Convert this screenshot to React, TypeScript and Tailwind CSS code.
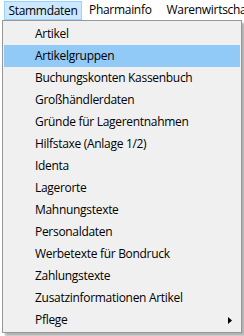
const items = [
  "Artikel",
  "Artikelgruppen",
  "Buchungskonten Kassenbuch",
  "Großhändlerdaten",
  "Gründe für Lagerentnahmen",
  "Hilfstaxe (Anlage 1/2)",
  "Identa",
  "Lagerorte",
  "Mahnungstexte",
  "Personaldaten",
  "Werbetexte für Bondruck",
  "Zahlungstexte",
  "Zusatzinformationen Artikel",
  "Pflege",
];

export default function App() {
  return (
    <div
      className="relative h-[336px] w-[244px] overflow-hidden bg-white text-[12px] tracking-[-0.3px] text-black"
      style={{ fontFamily: '"Open Sans", "Noto Sans", sans-serif' }}
    >
      {/* menu bar */}
      <div className="flex h-5 items-center whitespace-nowrap pl-1">
        <div className="mt-[1px] flex h-[19px] w-[78px] shrink-0 items-center justify-center border border-[#99d1ff] bg-[#cce8ff]">
          Stammdaten
        </div>
        <div className="ml-[7px] shrink-0">Pharmainfo</div>
        <div className="ml-[15px] shrink-0">Warenwirtschaft</div>
      </div>

      {/* dropdown */}
      <div className="absolute left-[2px] top-5 w-[240px] border border-[#979797] bg-[#f0f0f0] px-[1px] pt-[2px] pb-[1px] shadow-[3px_3px_2px_rgba(0,0,0,0.3)]">
        {items.map((item, i) => (
          <div
            key={item}
            className={
              "relative flex h-[22px] items-center whitespace-nowrap pl-[31px] " +
              (i === 1 ? "bg-[#91c9f7]" : "")
            }
          >
            {item}
            {item === "Pflege" && (
              <svg
                className="absolute right-[8px] top-[8px]"
                width="4"
                height="7"
                viewBox="0 0 4 7"
              >
                <path d="M0 0 L4 3.5 L0 7 Z" fill="#000" />
              </svg>
            )}
          </div>
        ))}
      </div>
    </div>
  );
}
